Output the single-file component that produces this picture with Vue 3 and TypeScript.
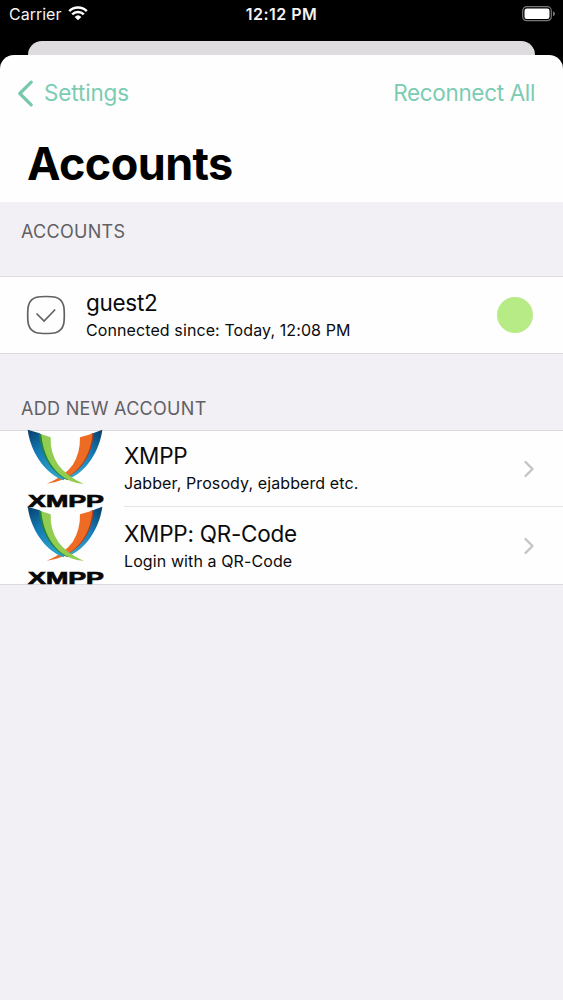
<script setup lang="ts">
interface Provider {
  title: string
  detail: string
}

const providers: Provider[] = [
  { title: 'XMPP', detail: 'Jabber, Prosody, ejabberd etc.' },
  { title: 'XMPP: QR-Code', detail: 'Login with a QR-Code' },
]
</script>

<template>
  <div class="screen">
    <header class="status">
      <div class="carrier">
        <span>Carrier</span>
        <svg class="wifi" viewBox="0 0 20 15" aria-hidden="true">
          <path d="M1.2 5.1a12.7 12.7 0 0 1 17.6 0" />
          <path d="M4.2 8.3a8.4 8.4 0 0 1 11.6 0" />
          <path class="wifi-dot" d="M6.7 10.9a4.8 4.8 0 0 1 6.6 0L10 14.3z" />
        </svg>
      </div>
      <span class="time">12:12 PM</span>
      <div class="power">
        <svg viewBox="0 0 34 16" aria-hidden="true">
          <rect x=".7" y=".7" width="28.6" height="14" rx="4" fill="none" stroke="#77777a" stroke-width="1.2" />
          <rect x="2.5" y="2.4" width="25" height="10.6" rx="2.3" fill="#fff" />
          <path d="M31 5.2q2 .8 2 2.5t-2 2.5z" fill="#77777a" />
        </svg>
      </div>
    </header>
    <div class="behind"></div>
    <main class="sheet">
      <nav class="nav">
        <button class="back">
          <svg viewBox="0 0 17 27" aria-hidden="true"><path d="M14.2 2.2 2.8 13.5l11.4 11.3" /></svg>
          <span>Settings</span>
        </button>
        <button class="reconnect">Reconnect All</button>
      </nav>
      <h1>Accounts</h1>
      <h2 class="first">ACCOUNTS</h2>
      <section class="group">
        <div class="account">
          <svg class="check" viewBox="0 0 40 40" aria-hidden="true">
            <path d="M20 1.500C24 1.500 27 1.600 29.500 2.300 34 3.500 36.300 6 37.500 10.500 38.200 13 38.300 16 38.300 20S38.200 27 37.500 29.500C36.300 34 34 36.500 29.500 37.700 27 38.400 24 38.500 20 38.500S13 38.400 10.500 37.700C6 36.500 3.700 34 2.500 29.500 1.800 27 1.700 24 1.700 20S1.800 13 2.500 10.500C3.700 6 6 3.500 10.500 2.300 13 1.600 16 1.500 20 1.500z" />
            <path d="m10.500 18.500 7.600 7.500L29.200 14.500" />
          </svg>
          <div class="copy">
            <div class="title guest">guest2</div>
            <div class="detail">Connected since: Today, 12:08 PM</div>
          </div>
          <span class="dot"></span>
        </div>
      </section>
      <h2 class="second">ADD NEW ACCOUNT</h2>
      <section class="group">
        <div v-for="(p, i) in providers" :key="p.title" class="provider">
          <svg class="logo" viewBox="36 16 231 231" aria-hidden="true">
            <defs>
              <linearGradient :id="`blue-${i}`" x1="0" y1="0" x2="0.5" y2="1">
                <stop offset="0" stop-color="#063d69" />
                <stop offset=".45" stop-color="#1479b4" />
                <stop offset="1" stop-color="#2aa1c9" />
              </linearGradient>
              <linearGradient :id="`blue-r-${i}`" x1="1" y1="0" x2="0.3" y2="1">
                <stop offset="0" stop-color="#063c68" />
                <stop offset=".5" stop-color="#1880ba" />
                <stop offset="1" stop-color="#36a6ce" />
              </linearGradient>
            </defs>
            <path :fill="`url(#blue-r-${i})`" d="M262 15C254 77 214 145 155 165L150 155C190 130 222 88 230 27Z" />
            <path fill="#ad3d1d" d="M236 26C232 90 199 142 145 164L139 158C188 128 220 82 226 28Z" />
            <path fill="#ee6b24" d="M232 27C228 91 193 144 139 166Q119 175 95 177Q149 155 173 121Q196 85 195 38Z" />
            <path :fill="`url(#blue-${i})`" d="M38 15C46 77 86 145 146 167L152 157C108 130 80 86 74 26Z" />
            <path fill="#238347" d="M72 26C76 89 107 143 158 167L164 157C113 132 85 84 80 29Z" />
            <path fill="#91cd51" d="M79 29C84 91 113 145 166 169Q187 177 207 178Q155 155 130 121Q105 85 107 38Z" />
            <text x="39" y="247" textLength="228" lengthAdjust="spacingAndGlyphs">XMPP</text>
          </svg>
          <div class="provider-body">
            <div class="copy">
              <div class="title">{{ p.title }}</div>
              <div class="detail">{{ p.detail }}</div>
            </div>
            <svg class="chevron" viewBox="0 0 12 18" aria-hidden="true"><path d="m2.500 2 7 7-7 7" /></svg>
          </div>
        </div>
      </section>
    </main>
  </div>
</template>

<style>
body {
  background: #f2f0f4;
}
</style>

<style scoped>
.screen {
  display: flex;
  flex-direction: column;
  height: 1000px;
  overflow: hidden;
  background: #000;
  color: #0b0b0d;
  font-family: Inter, 'Liberation Sans', sans-serif;
}
.status {
  display: grid;
  grid-template-columns: 1fr auto 1fr;
  align-items: center;
  flex: none;
  height: 41px;
  box-sizing: border-box;
  padding: 0 9px 13px 9px;
  color: #f4f4f4;
  font-size: 16px;
}
.carrier {
  display: flex;
  align-items: center;
  gap: 7px;
  letter-spacing: 0;
}
.wifi {
  width: 20px;
  height: 15px;
  margin-top: -1px;
  fill: none;
  stroke: #fff;
  stroke-width: 2.5;
}
.wifi .wifi-dot {
  fill: #fff;
  stroke: none;
}
.time {
  font-weight: 600;
  letter-spacing: 0.45px;
}
.power {
  display: flex;
  justify-content: flex-end;
}
.power svg {
  width: 34px;
  height: 16px;
  margin-right: -2px;
}
.behind {
  flex: none;
  height: 14px;
  margin: 0 28px;
  border-radius: 14px 14px 0 0;
  background: #dedcdf;
}
.sheet {
  flex: 1;
  border-radius: 14px 14px 0 0;
  background: linear-gradient(#fefefe 147px, #f2f0f4 147px);
}
.nav {
  display: flex;
  align-items: center;
  justify-content: space-between;
  height: 76px;
  padding: 0 28px 0 17px;
}
button {
  display: flex;
  align-items: center;
  padding: 0;
  border: 0;
  background: none;
  color: #7bccb2;
  font: 400 22.5px/28px Inter, sans-serif;
  letter-spacing: -0.35px;
}
.back {
  letter-spacing: -0.15px;
}
.back svg {
  width: 17px;
  height: 27px;
  margin-right: 10px;
  fill: none;
  stroke: #76c8ad;
  stroke-width: 3.2;
  stroke-linecap: round;
  stroke-linejoin: round;
}
h1 {
  height: 71px;
  margin: 0;
  padding-left: 27px;
  box-sizing: border-box;
  color: #000;
  font-size: 45px;
  font-weight: 700;
  line-height: 66px;
  letter-spacing: -0.6px;
}
h2 {
  box-sizing: border-box;
  margin: 0;
  padding-left: 21px;
  color: #606064;
  font-size: 18px;
  font-weight: 400;
  line-height: 22px;
  letter-spacing: 0.3px;
}
.first {
  height: 74px;
  padding-top: 19px;
}
.second {
  height: 76px;
  padding-top: 44px;
}
.group {
  border-top: 1px solid #dcdbde;
  border-bottom: 1px solid #dcdbde;
  background: #fefefe;
}
.account {
  display: flex;
  align-items: center;
  height: 76px;
  padding: 0 30px 0 26px;
}
.check {
  width: 40px;
  height: 40px;
  margin-right: 20px;
  fill: none;
  stroke: #626264;
  stroke-width: 1.7;
}
.copy {
  flex: 1;
  white-space: nowrap;
}
.title {
  font-size: 22.5px;
  line-height: 28px;
  letter-spacing: -0.25px;
}
.guest {
  letter-spacing: -0.3px;
}
.detail {
  padding-top: 1px;
  font-size: 16px;
  line-height: 24px;
  letter-spacing: 0.1px;
}
.dot {
  width: 36px;
  height: 36px;
  border-radius: 50%;
  background: #b7eb86;
}
.provider {
  display: flex;
  height: 76px;
  padding-left: 27px;
}
.provider:last-child {
  height: 77px;
}
.logo {
  flex: none;
  width: 77px;
  height: 77px;
  margin: -1px 20px 0 0;
  overflow: visible;
}
.provider:last-child .logo {
  margin-top: 0;
}
.logo text {
  font-family: 'Liberation Sans', Arial, sans-serif;
  font-size: 50px;
  font-weight: 700;
  fill: #080808;
  stroke: #080808;
  stroke-width: 2;
}
.provider-body {
  display: flex;
  flex: 1;
  align-items: center;
  box-sizing: border-box;
  padding-right: 28px;
  border-bottom: 1px solid #e4e3e5;
}
.provider:last-child .provider-body {
  padding-top: 1px;
  border-bottom: 0;
}
.chevron {
  width: 12px;
  height: 18px;
  fill: none;
  stroke: #c4c3c7;
  stroke-width: 2.4;
  stroke-linecap: round;
  stroke-linejoin: round;
}
</style>
